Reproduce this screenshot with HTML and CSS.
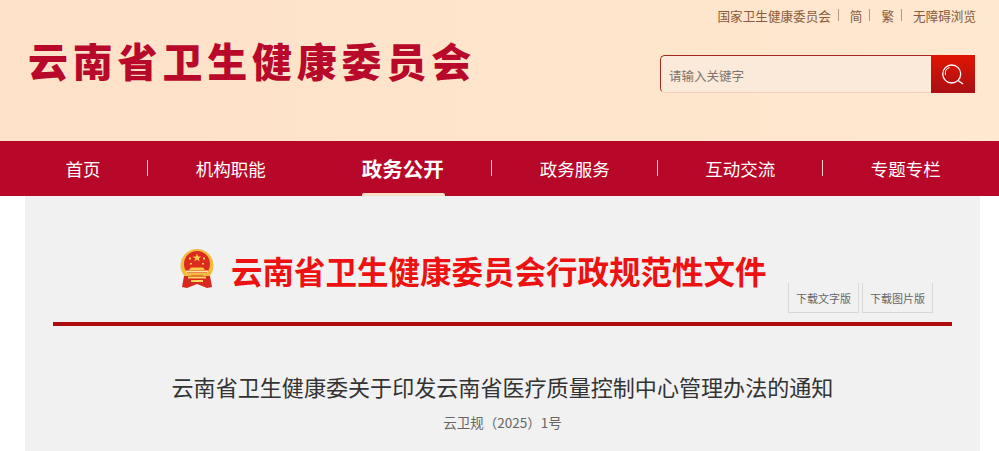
FILE: index.html
```html
<!DOCTYPE html>
<html lang="zh-CN">
<head>
    <meta charset="UTF-8">
    <title>云南省卫生健康委员会</title>
    <link rel="stylesheet" href="styles.css">
</head>
<body>
    <header class="top">
        <h1 class="site-name">云南省卫生健康委员会</h1>
        <div class="top-right">
            <div class="top-links">
                <a>国家卫生健康委员会</a><i></i>
                <a>简</a><i></i>
                <a>繁</a><i></i>
                <a>无障碍浏览</a>
            </div>
            <div class="search">
                <div class="search-text">请输入关键字</div>
                <div class="search-btn">
                    <svg width="30" height="30" viewBox="0 0 30 30" fill="none" stroke="#fff">
                        <circle cx="13.700" cy="15" r="9" stroke-width="1.300"/>
                        <path d="M7.500 16c-1-3.500 1-6.500 4-7.500" stroke-width="1.100"/>
                        <path d="M20 21.500l5 3.500" stroke-width="1.500"/>
                    </svg>
                </div>
            </div>
        </div>
    </header>

    <nav class="nav">
        <a class="nav-item first">首页</a>
        <a class="nav-item no-line">机构职能</a>
        <a class="nav-item active">政务公开</a>
        <a class="nav-item">政务服务</a>
        <a class="nav-item">互动交流</a>
        <a class="nav-item">专题专栏</a>
    </nav>

    <main class="content">
        <div class="doc-head">
            <svg class="emblem" width="36" height="39" viewBox="0 0 36 39">
                <circle cx="18" cy="16.500" r="16.500" fill="#f3bd3f"/>
                <circle cx="18" cy="15" r="13" fill="#dc2a1f"/>
                <path d="M18 4.500l1.100 3h3.100l-2.500 1.900 1 3-2.700-1.800-2.700 1.800 1-3-2.500-1.900h3.100z" fill="#f9d24a"/>
                <path d="M10 8.500h2v2h-2zM24 8.500h2v2h-2zM11 14h2v1.500h-2zM23 14h2v1.500h-2z" fill="#f9d24a"/>
                <path d="M12 18.500h12l2 2.500H10z" fill="#f6cb45"/>
                <path d="M7 21.500h22v2H7z" fill="#fbe596"/>
                <path d="M5 24h26v2.500H5z" fill="#f3bd3f"/>
                <path d="M5 27h26l2 11-5 1-10-4-10 4-5-1z" fill="#d8281f"/>
                <path d="M9 27.500h18v2H9zM12 31h12v2H12z" fill="#f8d75c"/>
            </svg>
            <h2 class="doc-org">云南省卫生健康委员会行政规范性文件</h2>
            <div class="doc-btns">
                <a class="doc-btn">下载文字版</a>
                <a class="doc-btn">下载图片版</a>
            </div>
        </div>
        <div class="doc-rule"></div>
        <h3 class="doc-title">云南省卫生健康委关于印发云南省医疗质量控制中心管理办法的通知</h3>
        <p class="doc-no">云卫规（2025）1号</p>
    </main>
</body>
</html>
```

FILE: styles.css
```css
* {
    box-sizing: border-box;
}
html, body {
    height: 451px;
    overflow: hidden;
}
body {
    margin: 0;
    background-color: #fff;
    font-family: "Noto Sans CJK SC", "Liberation Sans", sans-serif;
}
.top {
    height: 141px;
    display: flex;
    justify-content: space-between;
    background: linear-gradient(90deg, #fde1c8, #fee8cf);
}
.site-name {
    margin: 33px 0 0 28px;
    font-size: 40px;
    line-height: 54px;
    font-weight: 900;
    letter-spacing: 4.800px;
    color: #b9092b;
}
.top-right {
    width: 339px;
    margin-right: 24px;
    display: flex;
    flex-direction: column;
    align-items: flex-end;
}
.top-links {
    height: 30px;
    margin-right: -1px;
    display: flex;
    align-items: center;
    font-size: 12.600px;
    color: #8c5a3c;
    white-space: nowrap;
}
.top-links i {
    width: 1px;
    height: 12px;
    margin: 0 11px 0 7px;
    background-color: #b5967c;
}
.search {
    width: 315px;
    height: 38px;
    margin-top: 25px;
    display: flex;
    background-color: #fbe9da;
    border: 1px solid #a5281f;
    border-right: 0;
    border-bottom-color: #f7cfc0;
    border-radius: 5px 0 0 5px;
}
.search-text {
    flex: 1;
    padding-left: 8px;
    font-size: 12.500px;
    line-height: 40px;
    color: #7c7670;
}
.search-btn {
    width: 44px;
    margin: -1px 0;
    display: flex;
    align-items: center;
    justify-content: center;
    background: linear-gradient(180deg, #e01503, #a90f14);
}
.nav {
    height: 55px;
    padding-left: 18px;
    display: flex;
    background-color: #b8082a;
}
.nav-item {
    position: relative;
    width: 165.500px;
    text-align: center;
    font-size: 17.500px;
    line-height: 56px;
    color: #fff;
}
.nav-item.first {
    width: 130px;
}
.nav-item.active {
    width: 178.500px;
    font-size: 20.500px;
    line-height: 54px;
    font-weight: 700;
}
.nav-item.active::before {
    content: "";
    position: absolute;
    left: 48px;
    bottom: 0;
    width: 83px;
    height: 3px;
    border-radius: 2px 2px 0 0;
    background-color: #fde1c8;
}
.nav-item::after {
    content: "";
    position: absolute;
    right: 0;
    top: 19px;
    width: 1px;
    height: 16px;
    background-color: #f0d5cd;
}
.nav-item.no-line::after,
.nav-item:last-child::after {
    display: none;
}
.content {
    width: 955px;
    height: 255px;
    margin-left: 25px;
    padding: 0 28px;
    background-color: #f1f1f1;
}
.doc-head {
    height: 117px;
    padding: 53px 0 0 126px;
    position: relative;
    display: flex;
    align-items: flex-start;
}
.emblem {
    margin-right: 16px;
}
.doc-org {
    margin: -2px 0 0;
    font-size: 31.500px;
    line-height: 46px;
    font-weight: 700;
    color: #ee1111;
    white-space: nowrap;
}
.doc-btns {
    position: absolute;
    right: 19px;
    top: 87px;
    display: flex;
    gap: 3px;
}
.doc-btn {
    width: 71px;
    height: 30px;
    border: solid #d8d8d8;
    border-width: 0 1px 1px;
    text-align: center;
    font-size: 11px;
    line-height: 31px;
    color: #666;
}
.doc-rule {
    height: 4px;
    margin-top: 9px;
    background-color: #ae0d10;
}
.doc-title {
    margin: 44px 0 0;
    text-align: center;
    font-size: 22.070px;
    line-height: 32px;
    font-weight: 400;
    color: #333;
}
.doc-no {
    margin: 10px 0 0;
    text-align: center;
    font-size: 13.500px;
    line-height: 20px;
    color: #666;
}
```
